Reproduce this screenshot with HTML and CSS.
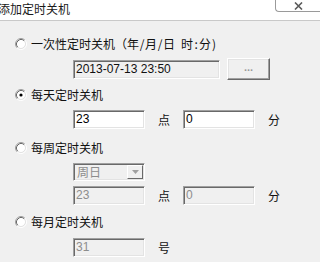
FILE: index.html
```html
<!DOCTYPE html>
<html lang="zh-CN">
<head>
<meta charset="utf-8">
<title>添加定时关机</title>
<link rel="stylesheet" href="styles.css">
</head>
<body>
<div class="titlebar">
  <span class="title">添加定时关机</span>
  <span class="close"><svg width="9" height="8" viewBox="0 0 9 8"><path d="M1 0.5L8 7.5M8 0.5L1 7.5" stroke="#5a5a5a" stroke-width="1.6" fill="none"/></svg></span>
</div>
<div class="content">
  <div class="radio-row r1">
    <svg class="radio" width="12" height="12" viewBox="0 0 12 12"><circle cx="6" cy="6" r="4" fill="#fff"/><path d="M2.11 9.89A5.5 5.5 0 0 1 9.89 2.11" stroke="#a0a0a0" fill="none"/><path d="M2.82 9.18A4.5 4.5 0 0 1 9.18 2.82" stroke="#696969" fill="none"/><path d="M9.89 2.11A5.5 5.5 0 0 1 2.11 9.89" stroke="#fff" fill="none"/><path d="M9.18 2.82A4.5 4.5 0 0 1 2.82 9.18" stroke="#e3e3e3" fill="none"/></svg>
    <span class="label">一次性定时关机（年<span class="h">/</span>月<span class="h">/</span>日<span class="h"> </span>时<span class="h">:</span>分<span class="h">)</span></span>
  </div>
  <div class="field-row f1">
    <div class="input wide readonly">2013-07-13 23:50</div>
    <div class="button">...</div>
  </div>
  <div class="radio-row r2">
    <svg class="radio" width="12" height="12" viewBox="0 0 12 12"><circle cx="6" cy="6" r="4" fill="#fff"/><path d="M2.11 9.89A5.5 5.5 0 0 1 9.89 2.11" stroke="#a0a0a0" fill="none"/><path d="M2.82 9.18A4.5 4.5 0 0 1 9.18 2.82" stroke="#696969" fill="none"/><path d="M9.89 2.11A5.5 5.5 0 0 1 2.11 9.89" stroke="#fff" fill="none"/><path d="M9.18 2.82A4.5 4.5 0 0 1 2.82 9.18" stroke="#e3e3e3" fill="none"/><circle cx="6" cy="6" r="1.6" fill="#000"/></svg>
    <span class="label">每天定时关机</span>
  </div>
  <div class="field-row f2">
    <div class="input">23</div>
    <span class="unit">点</span>
    <div class="input">0</div>
    <span class="unit">分</span>
  </div>
  <div class="radio-row r3">
    <svg class="radio" width="12" height="12" viewBox="0 0 12 12"><circle cx="6" cy="6" r="4" fill="#fff"/><path d="M2.11 9.89A5.5 5.5 0 0 1 9.89 2.11" stroke="#a0a0a0" fill="none"/><path d="M2.82 9.18A4.5 4.5 0 0 1 9.18 2.82" stroke="#696969" fill="none"/><path d="M9.89 2.11A5.5 5.5 0 0 1 2.11 9.89" stroke="#fff" fill="none"/><path d="M9.18 2.82A4.5 4.5 0 0 1 2.82 9.18" stroke="#e3e3e3" fill="none"/></svg>
    <span class="label">每周定时关机</span>
  </div>
  <div class="field-row f3">
    <div class="select disabled"><span class="sel-text">周日</span><span class="sel-btn"><svg width="7" height="4" viewBox="0 0 7 4"><path d="M0 0H7L3.5 4Z" fill="#a0a0a0"/></svg></span></div>
  </div>
  <div class="field-row f4">
    <div class="input disabled">23</div>
    <span class="unit">点</span>
    <div class="input disabled">0</div>
    <span class="unit">分</span>
  </div>
  <div class="radio-row r4">
    <svg class="radio" width="12" height="12" viewBox="0 0 12 12"><circle cx="6" cy="6" r="4" fill="#fff"/><path d="M2.11 9.89A5.5 5.5 0 0 1 9.89 2.11" stroke="#a0a0a0" fill="none"/><path d="M2.82 9.18A4.5 4.5 0 0 1 9.18 2.82" stroke="#696969" fill="none"/><path d="M9.89 2.11A5.5 5.5 0 0 1 2.11 9.89" stroke="#fff" fill="none"/><path d="M9.18 2.82A4.5 4.5 0 0 1 2.82 9.18" stroke="#e3e3e3" fill="none"/></svg>
    <span class="label">每月定时关机</span>
  </div>
  <div class="field-row f5">
    <div class="input disabled">31</div>
    <span class="unit">号</span>
  </div>
  <div class="field-row f6">
    <div class="input disabled"></div>
    <span class="unit"></span>
    <div class="input disabled"></div>
  </div>
</div>
</body>
</html>
```
FILE: styles.css
```css
html, body {
  margin: 0;
  padding: 0;
  height: 262px;
  overflow: hidden;
  background: #f0f0f0;
  font-family: "Noto Sans CJK SC", sans-serif;
  font-size: 12px;
  color: #000;
}

.titlebar {
  height: 20px;
  background: #fff;
  border-bottom: 1px solid #c9c9c9;
  display: flex;
  justify-content: space-between;
  align-items: flex-start;
}

.title {
  margin-left: -2px;
  line-height: 18px;
  color: #1a1a1a;
}

.close {
  box-sizing: border-box;
  width: 45px;
  height: 14px;
  margin-top: -2px;
  border: 1px solid #9a9a9a;
  border-right: none;
  border-radius: 0 0 0 4px;
  background: #fff;
  display: flex;
  align-items: center;
  justify-content: center;
  padding-top: 1px;
}

.close svg {
  display: block;
}

.content {
  padding-left: 15px;
}

.radio-row {
  display: flex;
  align-items: center;
  height: 12px;
  gap: 4px;
}

.radio {
  flex: none;
  display: block;
}

.label {
  line-height: 12px;
  white-space: nowrap;
  color: #111;
}

.h {
  display: inline-block;
  width: 6px;
  text-align: center;
}

.r1 { margin-top: 17px; }
.r2 { margin-top: 9px; }
.r3 { margin-top: 13px; }
.r4 { margin-top: 11px; }

.field-row {
  display: flex;
  align-items: center;
  padding-left: 58px;
  gap: 13px;
}

.f1 { margin-top: 8px; height: 22px; gap: 7px; }
.f2 { margin-top: 9px; }
.f3 { margin-top: 9px; }
.f4 { margin-top: 5px; }
.f5 { margin-top: 10px; }
.f6 { margin-top: 5px; }

.unit {
  width: 12px;
  line-height: 12px;
  color: #111;
}

.input {
  box-sizing: border-box;
  width: 72px;
  height: 19px;
  background: #fff;
  border: 1px solid;
  border-color: #a0a0a0 #fff #fff #a0a0a0;
  box-shadow: inset 1px 1px 0 #696969, inset -1px -1px 0 #e3e3e3;
  padding: 0 0 0 2px;
  line-height: 17px;
  font-family: "Liberation Sans", "Noto Sans CJK SC", sans-serif;
  font-size: 12px;
  color: #000;
  white-space: nowrap;
  overflow: hidden;
}

.input.wide {
  width: 147px;
}

.input.readonly {
  background: #f0f0f0;
  color: #111;
}

.input.disabled {
  background: #f0f0f0;
  color: #8d8d8d;
}

.button {
  box-sizing: border-box;
  width: 43px;
  height: 22px;
  background: #f0f0f0;
  border: 1px solid;
  border-color: #fff #696969 #696969 #fff;
  box-shadow: inset -1px -1px 0 #a0a0a0, inset 1px 1px 0 #e3e3e3;
  color: #9a9a9a;
  text-align: center;
  line-height: 16px;
  font-family: "Liberation Sans", sans-serif;
  font-size: 11px;
  font-weight: bold;
}

.select {
  box-sizing: border-box;
  width: 72px;
  height: 18px;
  background: #f0f0f0;
  border: 1px solid;
  border-color: #a0a0a0 #fff #fff #a0a0a0;
  box-shadow: inset 1px 1px 0 #696969, inset -1px -1px 0 #e3e3e3;
  display: flex;
  align-items: stretch;
  padding: 1px;
}

.sel-text {
  flex: 1;
  color: #8d8d8d;
  line-height: 14px;
  padding-left: 2px;
}

.sel-btn {
  box-sizing: border-box;
  width: 16px;
  border: 1px solid;
  border-color: #fff #696969 #696969 #fff;
  background: #f0f0f0;
  display: flex;
  align-items: center;
  justify-content: center;
}
```
